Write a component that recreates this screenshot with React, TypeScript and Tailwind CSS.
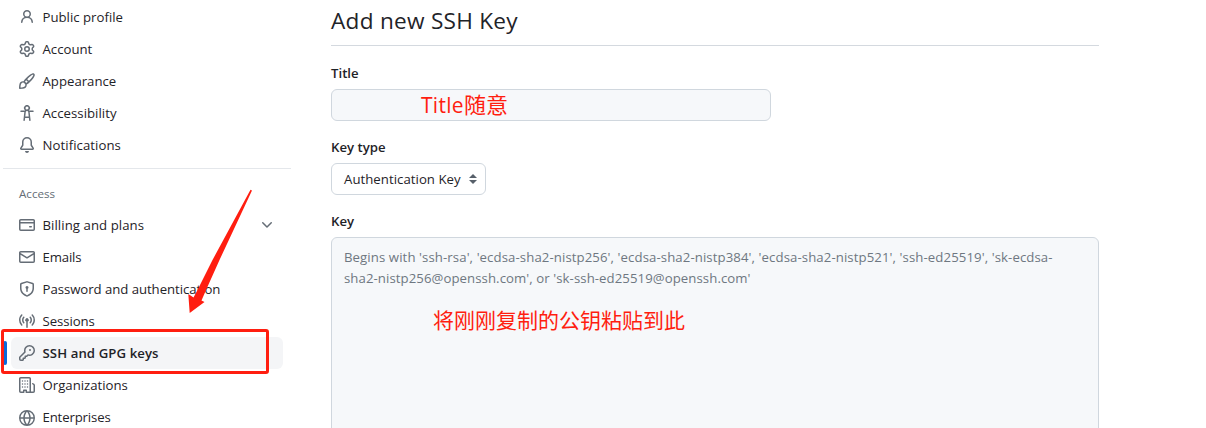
import React from "react";

const ICONS: Record<string, string> = {
  person:
    "M10.561 8.073a6.005 6.005 0 0 1 3.432 5.142.75.75 0 1 1-1.498.07 4.5 4.5 0 0 0-8.99 0 .75.75 0 0 1-1.498-.07 6.004 6.004 0 0 1 3.431-5.142 3.999 3.999 0 1 1 5.123 0ZM10.5 5a2.5 2.5 0 1 0-5 0 2.5 2.5 0 0 0 5 0Z",
  gear: "M8 0a8.2 8.2 0 0 1 .701.031C9.444.095 9.99.645 10.16 1.29l.288 1.107c.018.066.079.158.212.224.231.114.454.243.668.386.123.082.233.09.299.071l1.103-.303c.644-.176 1.392.021 1.82.63.27.385.506.792.704 1.218.315.675.111 1.422-.364 1.891l-.814.806c-.049.048-.098.147-.088.294.016.257.016.515 0 .772-.01.147.038.246.088.294l.814.806c.475.469.679 1.216.364 1.891a7.977 7.977 0 0 1-.704 1.217c-.428.61-1.176.807-1.82.63l-1.102-.302c-.067-.019-.177-.011-.3.071a5.909 5.909 0 0 1-.668.386c-.133.066-.194.158-.211.224l-.29 1.106c-.168.646-.715 1.196-1.458 1.26a8.006 8.006 0 0 1-1.402 0c-.743-.064-1.289-.614-1.458-1.26l-.289-1.106c-.018-.066-.079-.158-.212-.224a5.738 5.738 0 0 1-.668-.386c-.123-.082-.233-.09-.299-.071l-1.103.303c-.644.176-1.392-.021-1.82-.63a8.12 8.12 0 0 1-.704-1.218c-.315-.675-.111-1.422.363-1.891l.815-.806c.05-.048.098-.147.088-.294a6.214 6.214 0 0 1 0-.772c.01-.147-.038-.246-.088-.294l-.815-.806C.635 6.045.431 5.298.746 4.623a7.92 7.92 0 0 1 .704-1.217c.428-.61 1.176-.807 1.82-.63l1.102.302c.067.019.177.011.3-.071.214-.143.437-.272.668-.386.133-.066.194-.158.211-.224l.29-1.106C6.009.645 6.556.095 7.299.03 7.53.01 7.764 0 8 0Zm-.571 1.525c-.036.003-.108.036-.137.146l-.289 1.105c-.147.561-.549.967-.998 1.189-.173.086-.34.183-.5.29-.417.278-.97.423-1.529.27l-1.103-.303c-.109-.03-.175.016-.195.045-.22.312-.412.644-.573.99-.014.031-.021.11.059.19l.815.806c.411.406.562.957.53 1.456a4.709 4.709 0 0 0 0 .582c.032.499-.119 1.05-.53 1.456l-.815.806c-.081.08-.073.159-.059.19.162.346.353.677.573.989.02.03.085.076.195.046l1.102-.303c.56-.153 1.113-.008 1.53.27.161.107.328.204.501.29.447.222.85.629.997 1.189l.289 1.105c.029.109.101.143.137.146a6.6 6.6 0 0 0 1.142 0c.036-.003.108-.036.137-.146l.289-1.105c.147-.561.549-.967.998-1.189.173-.086.34-.183.5-.29.417-.278.97-.423 1.529-.27l1.103.303c.109.029.175-.016.195-.045.22-.313.411-.644.573-.99.014-.031.021-.11-.059-.19l-.815-.806c-.411-.406-.562-.957-.53-1.456a4.709 4.709 0 0 0 0-.582c-.032-.499.119-1.05.53-1.456l.815-.806c.081-.08.073-.159.059-.19a6.464 6.464 0 0 0-.573-.989c-.02-.03-.085-.076-.195-.046l-1.102.303c-.56.153-1.113.008-1.53-.27a4.44 4.44 0 0 0-.501-.29c-.447-.222-.85-.629-.997-1.189l-.289-1.105c-.029-.11-.101-.143-.137-.146a6.6 6.6 0 0 0-1.142 0ZM11 8a3 3 0 1 1-6 0 3 3 0 0 1 6 0ZM9.5 8a1.5 1.5 0 1 0-3.001.001A1.5 1.5 0 0 0 9.5 8Z",
  brush:
    "M11.134 1.535c.7-.509 1.416-.942 2.076-1.155.649-.21 1.463-.267 2.069.34.603.601.568 1.411.368 2.07-.202.668-.624 1.39-1.125 2.096-1.011 1.424-2.496 2.987-3.775 4.249-1.098 1.084-2.132 1.839-3.04 2.3a3.744 3.744 0 0 1-1.055 3.217c-.431.431-1.065.691-1.657.861-.614.177-1.294.287-1.914.357A21.151 21.151 0 0 1 .797 16H.743l.007-.75H.749L.742 16a.75.75 0 0 1-.743-.742l.743-.008-.742.007v-.054a21.25 21.25 0 0 1 .13-2.284c.067-.647.187-1.287.358-1.914.17-.591.43-1.226.86-1.657a3.746 3.746 0 0 1 3.227-1.054c.466-.893 1.225-1.907 2.314-2.982 1.271-1.255 2.833-2.75 4.245-3.777ZM1.62 13.089c-.051.464-.086.929-.104 1.395.466-.018.932-.053 1.396-.104a10.511 10.511 0 0 0 1.668-.309c.526-.151.856-.325 1.011-.48a2.25 2.25 0 1 0-3.182-3.182c-.155.155-.329.485-.48 1.01a10.515 10.515 0 0 0-.309 1.67Zm10.396-10.34c-1.224.89-2.605 2.189-3.822 3.384l1.718 1.718c1.21-1.205 2.51-2.597 3.387-3.833.47-.662.78-1.227.912-1.662.134-.444.032-.551.009-.575h-.001V1.78c-.014-.014-.113-.113-.548.027-.432.14-.995.462-1.655.942Zm-4.832 7.266-.001.001a9.859 9.859 0 0 0 1.63-1.142L7.155 7.216a9.7 9.7 0 0 0-1.161 1.607c.482.302.889.71 1.19 1.192Z",
  accessibility:
    "M9.923 5.302c.063.063.122.129.178.198H14A.75.75 0 0 1 14 7h-3.3l.578 5.163.362 2.997a.75.75 0 0 1-1.49.18L9.868 13H6.132l-.282 2.34a.75.75 0 0 1-1.49-.18l.362-2.997L5.3 7H2a.75.75 0 0 1 0-1.5h3.9a2.54 2.54 0 0 1 .176-.198 3 3 0 1 1 3.847 0ZM9.2 7.073h-.001a1.206 1.206 0 0 0-2.398 0L6.305 11.5h3.39ZM9.5 3a1.5 1.5 0 1 0-3.001.001A1.5 1.5 0 0 0 9.5 3Z",
  bell: "M8 16a2 2 0 0 0 1.985-1.75c.017-.137-.097-.25-.235-.25h-3.5c-.138 0-.252.113-.235.25A2 2 0 0 0 8 16ZM3 5a5 5 0 0 1 10 0v2.947c0 .05.015.098.042.139l1.703 2.555A1.519 1.519 0 0 1 13.482 13H2.518a1.516 1.516 0 0 1-1.263-2.36l1.703-2.554A.255.255 0 0 0 3 7.947Zm5-3.5A3.5 3.5 0 0 0 4.5 5v2.947c0 .346-.102.683-.294.97l-1.703 2.556a.017.017 0 0 0-.003.01l.001.006c0 .002.002.004.004.006l.006.004.007.001h10.964l.007-.001.006-.004.004-.006.001-.007a.017.017 0 0 0-.003-.01l-1.703-2.554a1.745 1.745 0 0 1-.294-.97V5A3.5 3.5 0 0 0 8 1.5Z",
  card: "M10.75 9a.75.75 0 0 0 0 1.5h1.5a.75.75 0 0 0 0-1.5h-1.5ZM0 3.75C0 2.784.784 2 1.75 2h12.5c.966 0 1.75.784 1.75 1.75v8.5A1.75 1.75 0 0 1 14.25 14H1.75A1.75 1.75 0 0 1 0 12.25ZM14.5 6.5h-13v5.75c0 .138.112.25.25.25h12.5a.25.25 0 0 0 .25-.25Zm0-2.75a.25.25 0 0 0-.25-.25H1.75a.25.25 0 0 0-.25.25V5h13Z",
  mail: "M1.75 2h12.5c.966 0 1.75.784 1.75 1.75v8.5A1.75 1.75 0 0 1 14.25 14H1.75A1.75 1.75 0 0 1 0 12.25v-8.5C0 2.784.784 2 1.75 2ZM1.5 12.251c0 .138.112.25.25.25h12.5a.25.25 0 0 0 .25-.25V5.809L8.38 9.397a.75.75 0 0 1-.76 0L1.5 5.809v6.442Zm13-8.181v-.32a.25.25 0 0 0-.25-.25H1.75a.25.25 0 0 0-.25.25v.32L8 7.88Z",
  shield:
    "m8.533.133 5.25 1.68A1.75 1.75 0 0 1 15 3.48V7c0 1.566-.32 3.182-1.303 4.682-.983 1.498-2.585 2.813-5.032 3.855a1.697 1.697 0 0 1-1.33 0c-2.447-1.042-4.049-2.357-5.032-3.855C1.32 10.182 1 8.566 1 7V3.48a1.75 1.75 0 0 1 1.217-1.667l5.25-1.68a1.748 1.748 0 0 1 1.066 0Zm-.61 1.429.001.001-5.25 1.68a.251.251 0 0 0-.174.237V7c0 1.36.275 2.666 1.057 3.859.784 1.194 2.121 2.342 4.366 3.298a.196.196 0 0 0 .154 0c2.245-.957 3.582-2.103 4.366-3.297C13.225 9.666 13.5 8.358 13.5 7V3.48a.25.25 0 0 0-.174-.238l-5.25-1.68a.25.25 0 0 0-.153 0ZM9.5 6.5c0 .536-.286 1.032-.75 1.3v2.45a.75.75 0 0 1-1.5 0V7.8A1.5 1.5 0 1 1 9.5 6.5Z",
  broadcast:
    "M8.75 8.582v5.668a.75.75 0 0 1-1.5 0V8.582a1.75 1.75 0 1 1 1.5 0Zm3.983-7.125a.75.75 0 0 1 1.06.026A7.976 7.976 0 0 1 16 7c0 2.139-.84 4.083-2.207 5.517a.75.75 0 1 1-1.086-1.034A6.474 6.474 0 0 0 14.5 7a6.474 6.474 0 0 0-1.793-4.483.75.75 0 0 1 .026-1.06Zm-9.466 0c.3.286.312.76.026 1.06A6.474 6.474 0 0 0 1.5 7a6.47 6.47 0 0 0 1.793 4.483.75.75 0 0 1-1.086 1.034A7.973 7.973 0 0 1 0 7c0-2.139.84-4.083 2.207-5.517a.75.75 0 0 1 1.06-.026Zm8.556 2.321A4.988 4.988 0 0 1 13 7a4.988 4.988 0 0 1-1.177 3.222.75.75 0 1 1-1.146-.967A3.487 3.487 0 0 0 11.5 7c0-.86-.309-1.645-.823-2.255a.75.75 0 0 1 1.146-.967Zm-6.492.958A3.48 3.48 0 0 0 4.5 7a3.48 3.48 0 0 0 .823 2.255.75.75 0 0 1-1.146.967A4.981 4.981 0 0 1 3 7a4.982 4.982 0 0 1 1.188-3.236.75.75 0 1 1 1.143.972Z",
  key: "M10.5 0a5.499 5.499 0 1 1-1.288 10.848l-.932.932a.749.749 0 0 1-.53.22H7v.75a.749.749 0 0 1-.22.53l-.5.5a.749.749 0 0 1-.53.22H5v.75a.749.749 0 0 1-.22.53l-.5.5a.749.749 0 0 1-.53.22h-2A1.75 1.75 0 0 1 0 14.25v-2c0-.199.079-.389.22-.53l4.932-4.932A5.5 5.5 0 0 1 10.5 0Zm-4 5.5c-.001.431.069.86.205 1.269a.75.75 0 0 1-.181.768L1.5 12.56v1.69c0 .138.112.25.25.25h1.69l.06-.06v-1.19a.75.75 0 0 1 .75-.75h1.19l.06-.06v-1.19a.75.75 0 0 1 .75-.75h1.19l1.023-1.025a.75.75 0 0 1 .768-.18A4 4 0 1 0 6.5 5.5ZM11 6a1 1 0 1 1 0-2 1 1 0 0 1 0 2Z",
  organization:
    "M1.75 16A1.75 1.75 0 0 1 0 14.25V1.75C0 .784.784 0 1.75 0h8.5C11.216 0 12 .784 12 1.75v12.5c0 .085-.006.168-.018.25h2.268a.25.25 0 0 0 .25-.25V8.285a.25.25 0 0 0-.111-.208l-1.055-.703a.749.749 0 1 1 .832-1.248l1.055.703c.487.325.779.871.779 1.456v5.965A1.75 1.75 0 0 1 14.25 16h-3.5a.766.766 0 0 1-.197-.026c-.099.017-.2.026-.303.026h-3a.75.75 0 0 1-.75-.75V14h-1v1.250a.75.75 0 0 1-.75.75Zm-.25-1.75c0 .138.112.25.25.25H4v-1.250a.75.75 0 0 1 .75-.75h2.500a.75.75 0 0 1 .75.75v1.250h2.250a.25.25 0 0 0 .25-.25V1.750a.25.25 0 0 0-.25-.25h-8.500a.25.25 0 0 0-.25.25ZM2.750 4a.75.75 0 1 1 1.500 0 .75.75 0 0 1-1.500 0ZM5.250 4a.75.75 0 1 1 1.500 0 .75.75 0 0 1-1.500 0ZM7.750 4a.75.75 0 1 1 1.500 0 .75.75 0 0 1-1.500 0ZM2.750 7a.75.75 0 1 1 1.500 0 .75.75 0 0 1-1.500 0ZM5.250 7a.75.75 0 1 1 1.500 0 .75.75 0 0 1-1.500 0ZM7.750 7a.75.75 0 1 1 1.500 0 .75.75 0 0 1-1.500 0ZM2.750 10a.75.75 0 1 1 1.500 0 .75.75 0 0 1-1.500 0ZM5.250 10a.75.75 0 1 1 1.500 0 .75.75 0 0 1-1.500 0ZM7.750 10a.75.75 0 1 1 1.500 0 .75.75 0 0 1-1.500 0Z",
  globe:
    "M8 0a8 8 0 1 1 0 16A8 8 0 0 1 8 0ZM5.78 8.75a9.64 9.64 0 0 0 1.363 4.177c.255.426.542.832.857 1.215.245-.296.551-.705.857-1.215A9.64 9.64 0 0 0 10.22 8.75Zm4.44-1.5a9.64 9.64 0 0 0-1.363-4.177c-.307-.51-.612-.919-.857-1.215a9.927 9.927 0 0 0-.857 1.215A9.64 9.64 0 0 0 5.78 7.25Zm-5.944 1.5H1.543a6.507 6.507 0 0 0 4.666 5.5c-.123-.181-.24-.365-.352-.552-.715-1.192-1.437-2.874-1.581-4.948Zm-2.733-1.5h2.733c.144-2.074.866-3.756 1.58-4.948.12-.197.237-.381.353-.552a6.507 6.507 0 0 0-4.666 5.5Zm10.181 1.5c-.144 2.074-.866 3.756-1.58 4.948-.12.197-.237.381-.353.552a6.507 6.507 0 0 0 4.666-5.5Zm2.733-1.5a6.507 6.507 0 0 0-4.666-5.5c.123.181.24.365.353.552.714 1.192 1.436 2.874 1.58 4.948Z",
  chevron:
    "M12.78 5.22a.749.749 0 0 1 0 1.06l-4.25 4.25a.749.749 0 0 1-1.06 0L3.22 6.28a.749.749 0 1 1 1.06-1.06L8 8.939l3.72-3.719a.749.749 0 0 1 1.06 0Z",
};

function Icon({ name, nudge = "" }: { name: string; nudge?: string }) {
  return (
    <svg viewBox="0 0 16 16" className={"size-4 shrink-0 fill-[#656d76] " + nudge}>
      <path d={ICONS[name]} />
    </svg>
  );
}

type Item = {
  icon: string;
  label: string;
  tracking?: string;
  nudge?: string;
  expandable?: boolean;
  active?: boolean;
};

const PERSONAL: Item[] = [
  { icon: "person", label: "Public profile" },
  { icon: "gear", label: "Account" },
  { icon: "brush", label: "Appearance" },
  { icon: "accessibility", label: "Accessibility", tracking: "tracking-[0.03px]" },
  { icon: "bell", label: "Notifications", tracking: "tracking-[0.06px]" },
];

const ACCESS: Item[] = [
  { icon: "card", label: "Billing and plans", tracking: "tracking-[0.06px]", expandable: true },
  { icon: "mail", label: "Emails", tracking: "tracking-[-0.15px]" },
  { icon: "shield", label: "Password and authentication", tracking: "tracking-[-0.05px]" },
  { icon: "broadcast", label: "Sessions", tracking: "tracking-[-0.08px]" },
  { icon: "key", label: "SSH and GPG keys", tracking: "tracking-[0.08px]", active: true },
  { icon: "organization", label: "Organizations" },
  { icon: "globe", label: "Enterprises", tracking: "tracking-[-0.15px]", nudge: "mt-0.5" },
];

function NavItem({ item }: { item: Item }) {
  return (
    <li
      className={
        "relative flex h-8 items-center gap-2 rounded-md px-2 " +
        (item.active ? "bg-[#f4f5f7] font-semibold" : "")
      }
    >
      {item.active && <span className="absolute top-1 -left-2 h-6 w-1 rounded-md bg-[#0969da]" />}
      <Icon name={item.icon} nudge={item.nudge} />
      <span className={"-ml-[0.5px] flex-1 whitespace-nowrap " + (item.tracking ?? "")}>{item.label}</span>
      {item.expandable && <Icon name="chevron" />}
    </li>
  );
}

export default function App() {
  return (
    <div className="relative flex h-[428px] w-[1206px] overflow-hidden bg-white font-['Open_Sans','Noto_Sans_CJK_SC',sans-serif] text-[13.2px] leading-5 text-[#1f2328]">
      <nav className="w-[291px] shrink-0 pl-[3px]">
        <ul className="mx-2 pt-px">
          {PERSONAL.map((item) => (
            <NavItem key={item.label} item={item} />
          ))}
        </ul>
        <div className="mt-[7px] h-px bg-[#e4e7eb]" />
        <h3 className="mt-4 ml-4 h-6 text-[11.6px] leading-[18px] font-medium text-[#656d76]">Access</h3>
        <ul className="mx-2">
          {ACCESS.map((item) => (
            <NavItem key={item.label} item={item} />
          ))}
        </ul>
      </nav>

      <main className="ml-10 w-[768px] shrink-0">
        <h2 className="h-[46px] border-b border-[#d4d9df] pt-[3px] text-[22.6px] leading-9 tracking-[0.27px]">
          Add new SSH Key
        </h2>
        <label className="mt-[17px] block h-[26px] font-semibold">Title</label>
        <div className="h-8 w-[440px] rounded-md border border-[#d0d7de] bg-[#f6f8fa] pl-[89px] text-[22px] leading-[28px] text-[#ff1e10]">
          <span className="text-[21px] tracking-[0.3px]">Title</span>随意
        </div>
        <label className="mt-4 block h-[26px] font-semibold">Key type</label>
        <div className="flex h-8 w-[155px] items-center justify-between rounded-md border border-[#d0d7de] pr-2 pl-3">
          <span className="tracking-[0.04px] whitespace-nowrap">Authentication Key</span>
          <svg viewBox="0 0 8 10" className="h-2.5 w-2 fill-[#57606a]">
            <path d="M4 0 8 4H0ZM0 6h8L4 10Z" />
          </svg>
        </div>
        <label className="mt-4 block h-[26px] font-semibold">Key</label>
        <div className="h-[260px] rounded-md border border-[#d0d7de] bg-[#f6f8fa] px-3 pt-[9px] leading-[21px] text-[#6e7781]">
          <p className="tracking-[0.093px] whitespace-nowrap">
            Begins with 'ssh-rsa', 'ecdsa-sha2-nistp256', 'ecdsa-sha2-nistp384', 'ecdsa-sha2-nistp521', 'ssh-ed25519', 'sk-ecdsa-
          </p>
          <p className="tracking-[0.075px] whitespace-nowrap">
            sha2-nistp256@openssh.com', or 'sk-ssh-ed25519@openssh.com'
          </p>
          <p className="mt-[15px] ml-[89px] text-[21px] leading-8 text-[#ff1e10]">将刚刚复制的公钥粘贴到此</p>
        </div>
      </main>

      <div className="absolute top-[329px] left-px h-[45px] w-[268px] rounded-[3px] border-3 border-[#ff1e10]" />
      <svg viewBox="0 0 70 130" className="absolute top-[186px] left-[185px] h-[130px] w-[70px] fill-[#ff1e10]">
        <path d="M65.500 3.800 67 4.500 34.500 74 21.500 103 16.500 114.500 19.500 116 4.700 127 3.300 108 8.500 111.500 12.500 104 27.500 74Z" />
      </svg>
    </div>
  );
}
